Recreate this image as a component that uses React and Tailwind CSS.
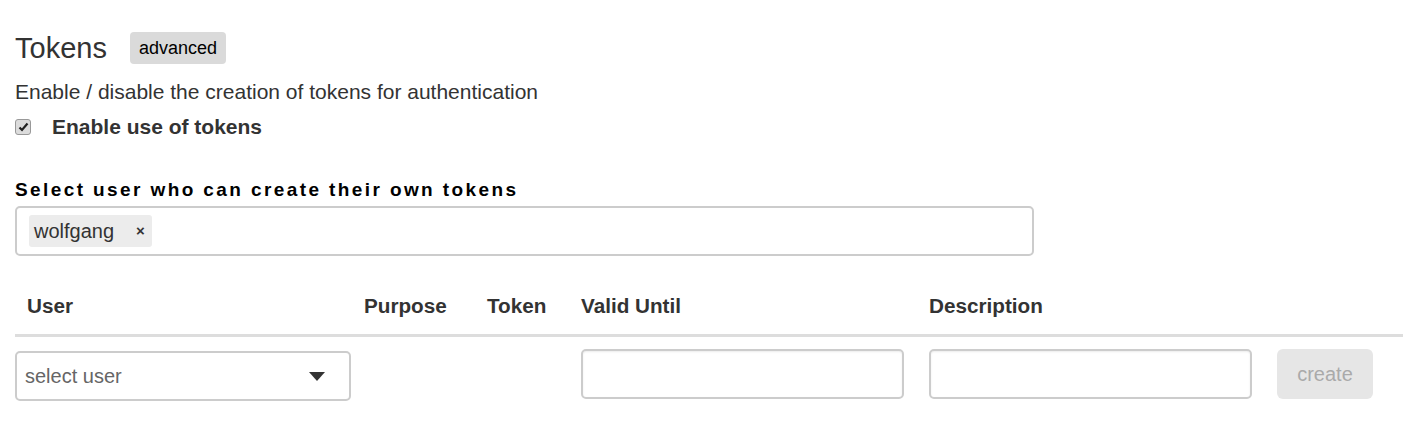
import { useState } from 'react';

export default function App() {
  const [enabled, setEnabled] = useState(true);
  const [users, setUsers] = useState(['wolfgang']);

  return (
    <div className="min-h-screen bg-white pl-[15px] pr-[2px] pt-[32px] font-['Liberation_Sans',Arial,sans-serif] text-[#333]">
      {/* heading */}
      <div className="flex h-8 items-center gap-[23px]">
        <h1 className="text-[29px] leading-8 font-normal">Tokens</h1>
        <span className="h-8 rounded-[4px] bg-[#dadada] px-[9px] text-[18px] leading-8 text-black">advanced</span>
      </div>

      <p className="mt-4 text-[21px] leading-6">
        Enable / disable the creation of tokens for authentication
      </p>

      <label className="mt-[11px] flex h-6 items-center cursor-pointer" onClick={() => setEnabled(!enabled)}>
        <span className="flex h-4 w-4 items-center justify-center rounded-[3px] border border-[#999] bg-[#dcdcdc]">
          {enabled && (
            <svg width="11" height="10" viewBox="0 0 11 10">
              <path d="M1.5 5.5 L4 8 L9.5 1.5" fill="none" stroke="#222" strokeWidth="2.2" />
            </svg>
          )}
        </span>
        <span className="ml-[21px] text-[21px] font-bold leading-6">Enable use of tokens</span>
      </label>

      <div className="mt-[39px] text-[19px] font-bold leading-6 tracking-[2.4px] text-black">
        Select user who can create their own tokens
      </div>

      <div className="mt-1 flex h-[50px] w-[1019px] items-center gap-2 rounded-[5px] border-2 border-[#ccc] pl-3">
        {users.map((u) => (
          <span key={u} className="flex h-8 items-center rounded-[3px] bg-[#ececec] pl-[5px] pr-[7px] text-[20px]">
            {u}
            <button
              className="ml-[22px] text-[15px] font-bold text-[#333]"
              onClick={() => setUsers(users.filter((x) => x !== u))}
            >
              ×
            </button>
          </span>
        ))}
      </div>

      {/* table */}
      <div className="mt-[38px] grid grid-cols-[349px_123px_94px_348px_348px_1fr] border-b-[3px] border-[#ddd] pb-4 text-[20.7px] font-bold leading-6">
        <div className="pl-3">User</div>
        <div>Purpose</div>
        <div>Token</div>
        <div>Valid Until</div>
        <div>Description</div>
        <div></div>
      </div>

      <div className="mt-[12px] grid grid-cols-[349px_123px_94px_348px_348px_1fr] items-start">
        <div className="mt-[2px] flex h-[50px] w-[336px] items-center justify-between rounded-[5px] border-2 border-[#ccc] pl-2 pr-6">
          <span className="text-[20px] text-[#666]">select user</span>
          <svg width="16" height="9" viewBox="0 0 16 9">
            <path d="M0 0 H16 L8 9 Z" fill="#333" />
          </svg>
        </div>
        <div></div>
        <div></div>
        <input className="h-[50px] w-[323px] rounded-[5px] border-2 border-[#ccc] px-2 text-[20px] outline-none shadow-[inset_0_1px_2px_rgba(0,0,0,0.08)]" />
        <input className="h-[50px] w-[323px] rounded-[5px] border-2 border-[#ccc] px-2 text-[20px] outline-none shadow-[inset_0_1px_2px_rgba(0,0,0,0.08)]" />
        <button className="h-[50px] w-[96px] rounded-[6px] bg-[#e6e6e6] text-[20px] text-[#aaa]" disabled>
          create
        </button>
      </div>
    </div>
  );
}
